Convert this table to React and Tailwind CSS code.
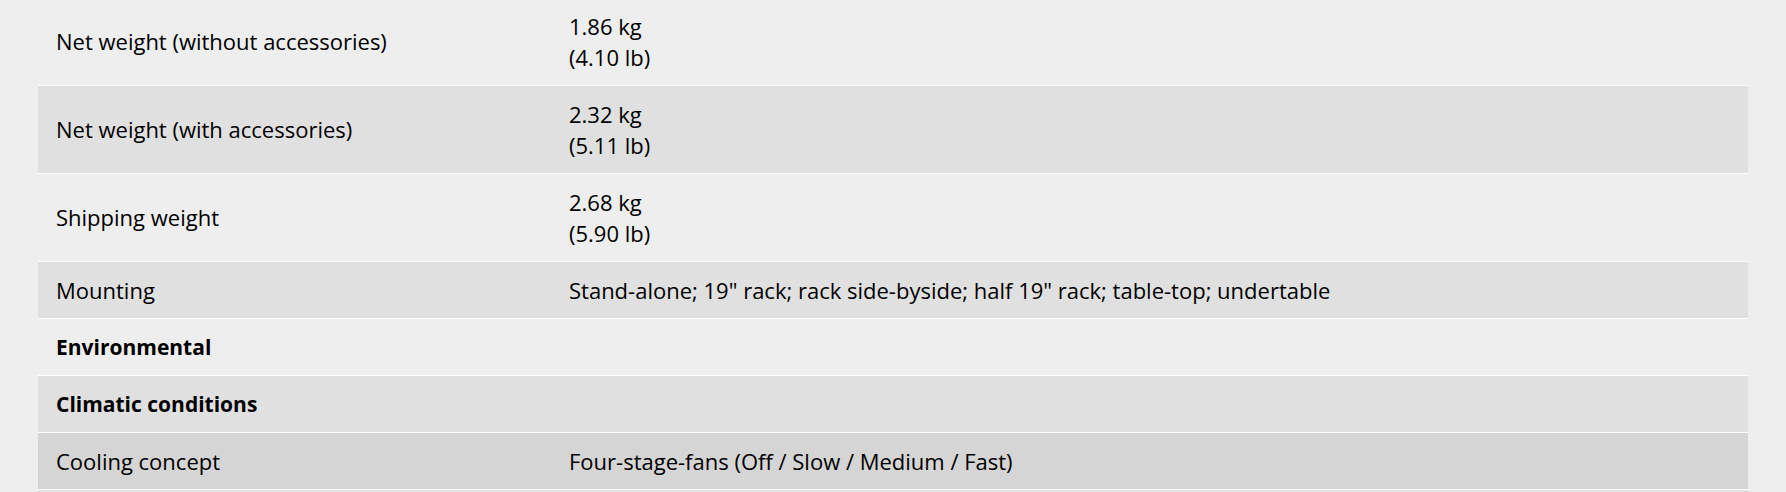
import React from 'react';

const rows = [
    { label: 'Net weight (without accessories)', value: ['1.86 kg', '(4.10 lb)'] },
    { label: 'Net weight (with accessories)', value: ['2.32 kg', '(5.11 lb)'] },
    { label: 'Shipping weight', value: ['2.68 kg', '(5.90 lb)'] },
    { label: 'Mounting', value: ['Stand-alone; 19" rack; rack side-byside; half 19" rack; table-top; undertable'] },
    { label: 'Environmental', heading: true },
    { label: 'Climatic conditions', heading: true },
    { label: 'Cooling concept', value: ['Four-stage-fans (Off / Slow / Medium / Fast)'], hover: true },
];

function SpecRow({ row, index }) {
    // striped rows, the hovered one a bit darker
    const bg = row.hover ? 'bg-[#d5d5d5]' : index % 2 === 0 ? 'bg-[#eeeeee]' : 'bg-[#e0e0e0]';
    return (
        <div className={`grid grid-cols-[30%_70%] items-center border-b border-white ${bg}`}>
            <div className={`px-[18px] py-[12.5px] ${row.heading ? 'text-[21px] font-bold' : ''}`}>{row.label}</div>
            <div className="px-[18px] py-[12.5px]">
                {row.value && row.value.map((line, i) => <div key={i}>{line}</div>)}
            </div>
        </div>
    );
}

export default function App() {
    return (
        <div className="h-screen overflow-hidden bg-[#eeeeee] px-[38px] font-['Open_Sans',sans-serif] text-[22px] leading-[31px] text-black">
            <div className="-mt-[2px]">
                {rows.map((row, i) => (
                    <SpecRow key={i} row={row} index={i} />
                ))}
                {/* next row, only its top edge shows */}
                <div className="h-[57px] bg-[#e0e0e0]" />
            </div>
        </div>
    );
}
